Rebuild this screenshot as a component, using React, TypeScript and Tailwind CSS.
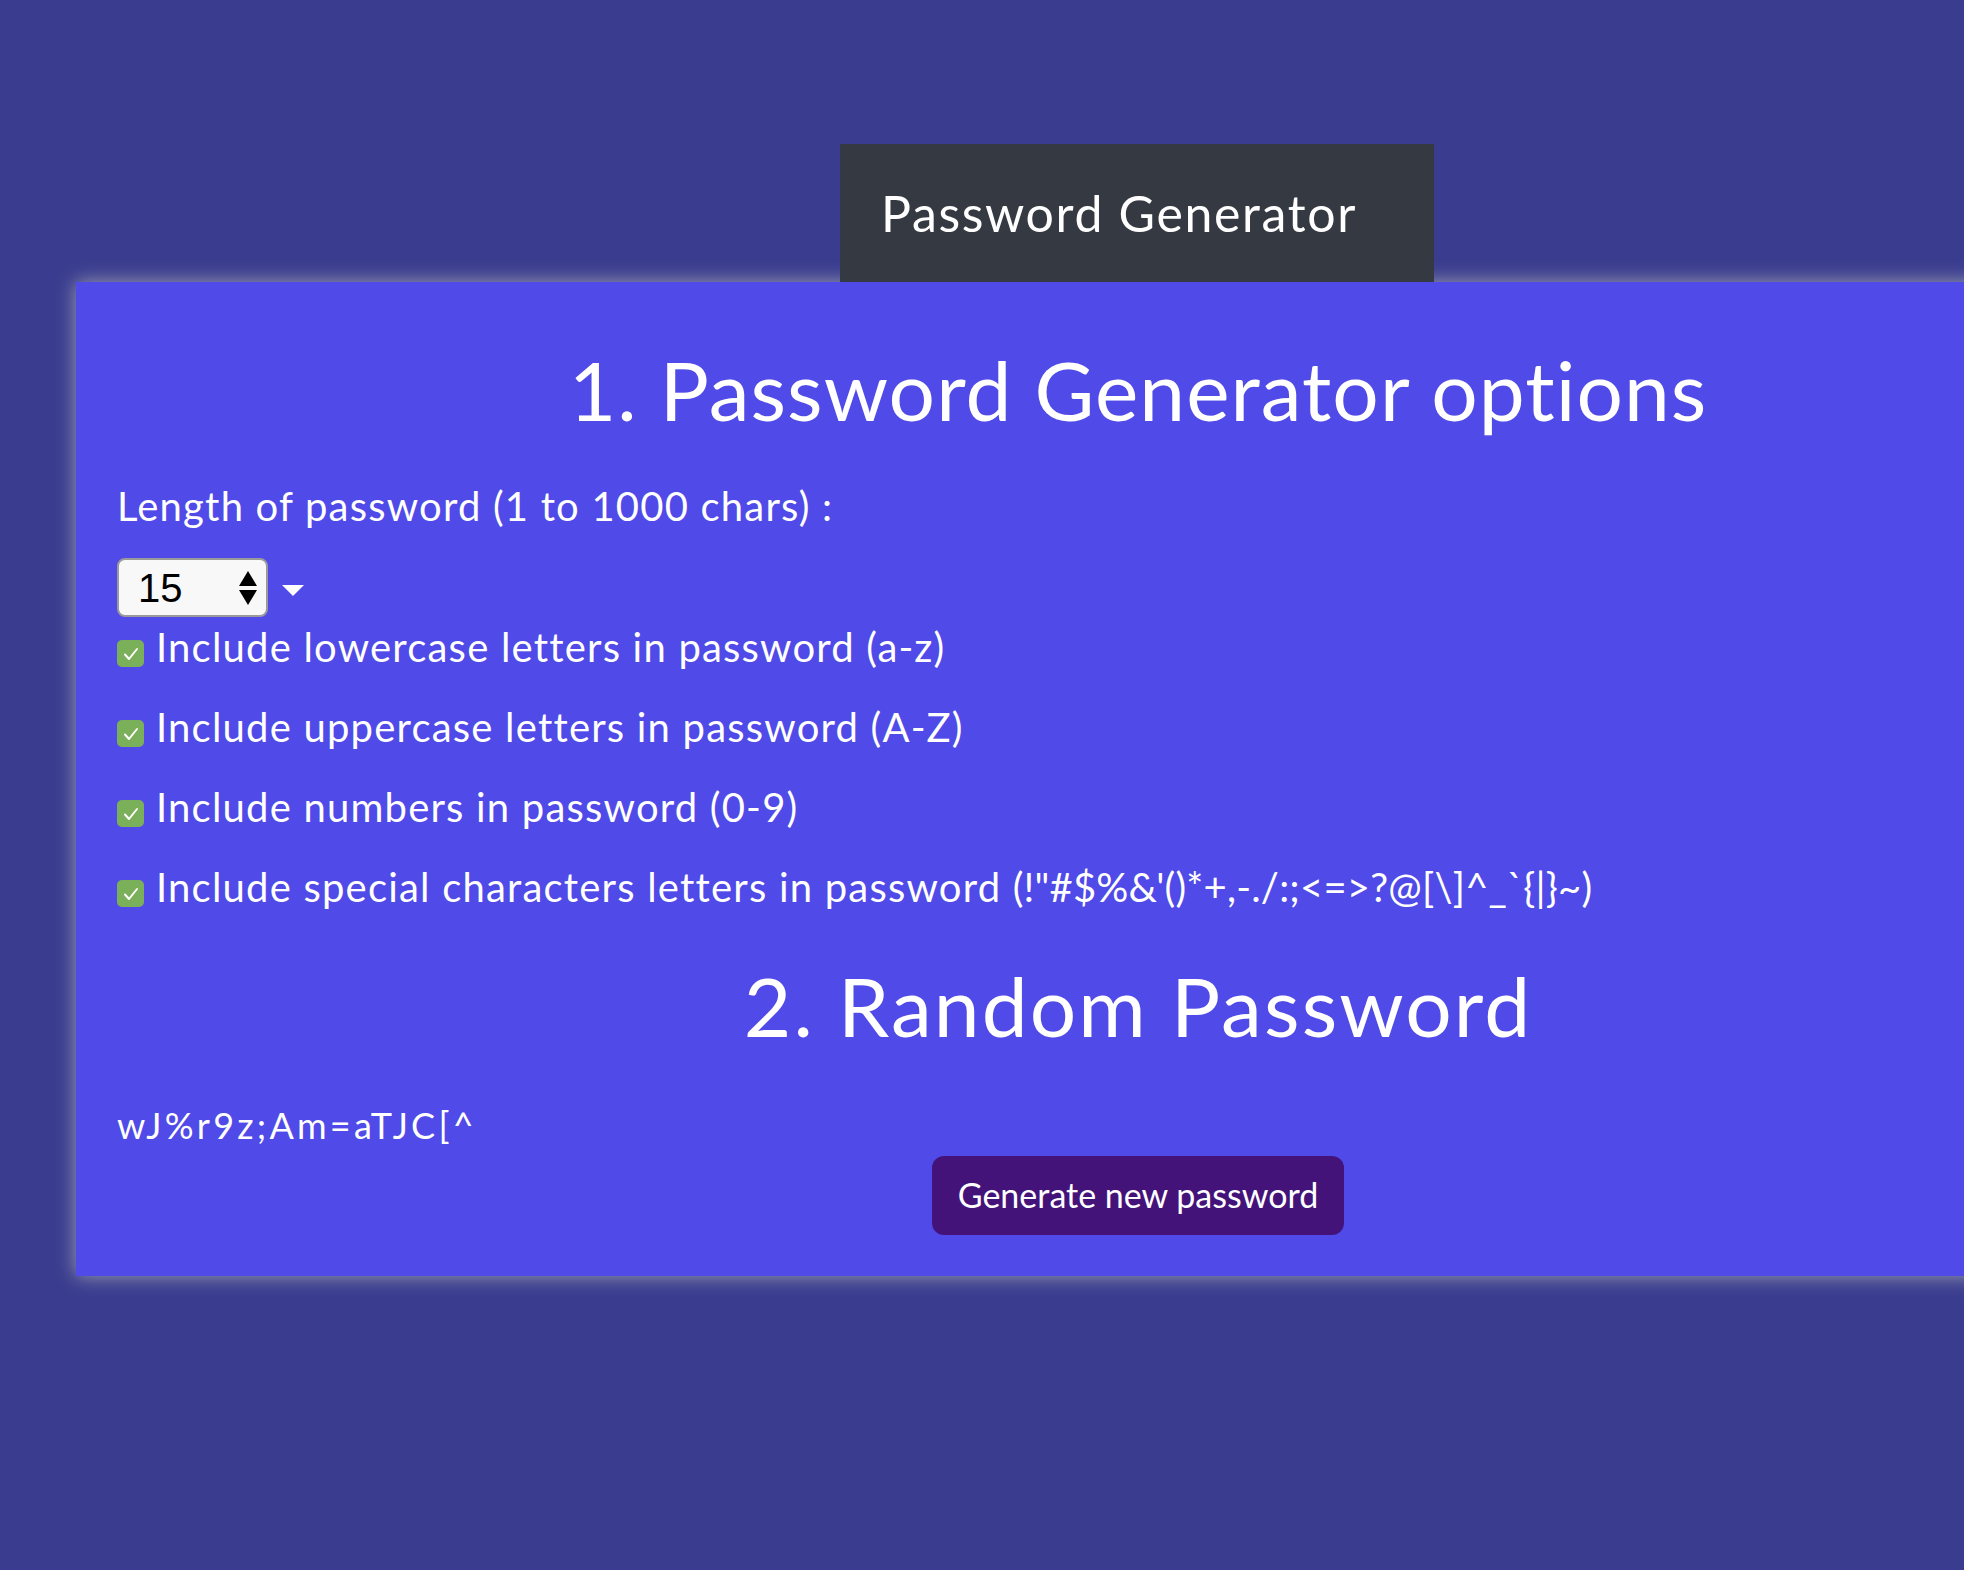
const options = [
  { text: "Include lowercase letters in password (a-z)" },
  { text: "Include uppercase letters in password (A-Z)" },
  { text: "Include numbers in password (0-9)" },
  {
    text: "Include special characters letters in password ",
    symbols: "(!\"#$%&'()*+,-./:;<=>?@[\\]^_`{|}~)",
  },
];

function CheckBox() {
  return (
    <div className="mt-[17px] mr-[12px] flex h-[27px] w-[27px] shrink-0 items-center justify-center rounded-[5px] bg-[#7bb05a]">
      <svg width="18" height="16" viewBox="0 0 18 16" fill="none">
        <path
          d="M3 8.5 L7 13 L15 3"
          stroke="white"
          strokeWidth="2"
          strokeLinecap="round"
          strokeLinejoin="round"
        />
      </svg>
    </div>
  );
}

export default function App() {
  return (
    <div className="min-h-screen w-full overflow-hidden bg-[#3a3d8f] pt-[144px] font-['Lato',sans-serif] text-white">
      {/* Top tab */}
      <div className="relative z-10 ml-[840px] flex h-[138px] w-[594px] items-center bg-[#353941] pl-[41px]">
        <span className="text-[50px] leading-[1.2] tracking-[0.033em]">Password Generator</span>
      </div>

      {/* Main panel */}
      <div className="ml-[76px] w-[2124px] bg-[#4f4ae8] px-[41px] pt-[58px] pb-[41px] shadow-[0_0_18px_rgba(190,190,190,0.75)]">
        <h1 className="text-center text-[82px] leading-[1.2] tracking-[0.013em]">
          1. Password Generator options
        </h1>

        <p className="mt-[44px] text-[40px] leading-[1.2] tracking-[0.03em]">
          Length of password (1 to 1000 chars) :
        </p>

        <div className="mt-[28px] flex items-center">
          <div className="flex h-[59px] w-[151px] items-center justify-between rounded-[8px] border-2 border-[#9a9a9a] bg-[#f8f8f8] pl-[19px] pr-[8px] font-['Liberation_Sans',sans-serif] text-[40px] leading-none text-black">
            <span>15</span>
            <svg width="20" height="36" viewBox="0 0 20 36">
              <path d="M10 1 L19 16 L1 16 Z" fill="black" />
              <path d="M1 20 L19 20 L10 35 Z" fill="black" />
            </svg>
          </div>
          <svg className="ml-[14px] mt-[6px]" width="22" height="11" viewBox="0 0 22 11">
            <path d="M0 0 L22 0 L11 11 Z" fill="white" />
          </svg>
        </div>

        <div className="mt-[6px] flex flex-col gap-[32px]">
          {options.map((o) => (
            <div key={o.text} className="flex items-start text-[40px] leading-[1.2] tracking-[0.03em]">
              <CheckBox />
              <span className="whitespace-pre">
                {o.text}
                {o.symbols && <span className="tracking-[0.005em]">{o.symbols}</span>}
              </span>
            </div>
          ))}
        </div>

        <h2 className="mt-[45px] text-center text-[82px] leading-[1.2] tracking-[0.026em]">
          2. Random Password
        </h2>

        <p className="mt-[49px] text-[36px] leading-[1.2] tracking-[0.09em]">wJ%r9z;Am=aTJC[^</p>

        <div className="mt-[9px] flex justify-center">
          <button className="h-[79px] rounded-[12px] bg-[#44137a] px-[26px] text-[34px] leading-none text-white">
            Generate new password
          </button>
        </div>
      </div>
    </div>
  );
}
